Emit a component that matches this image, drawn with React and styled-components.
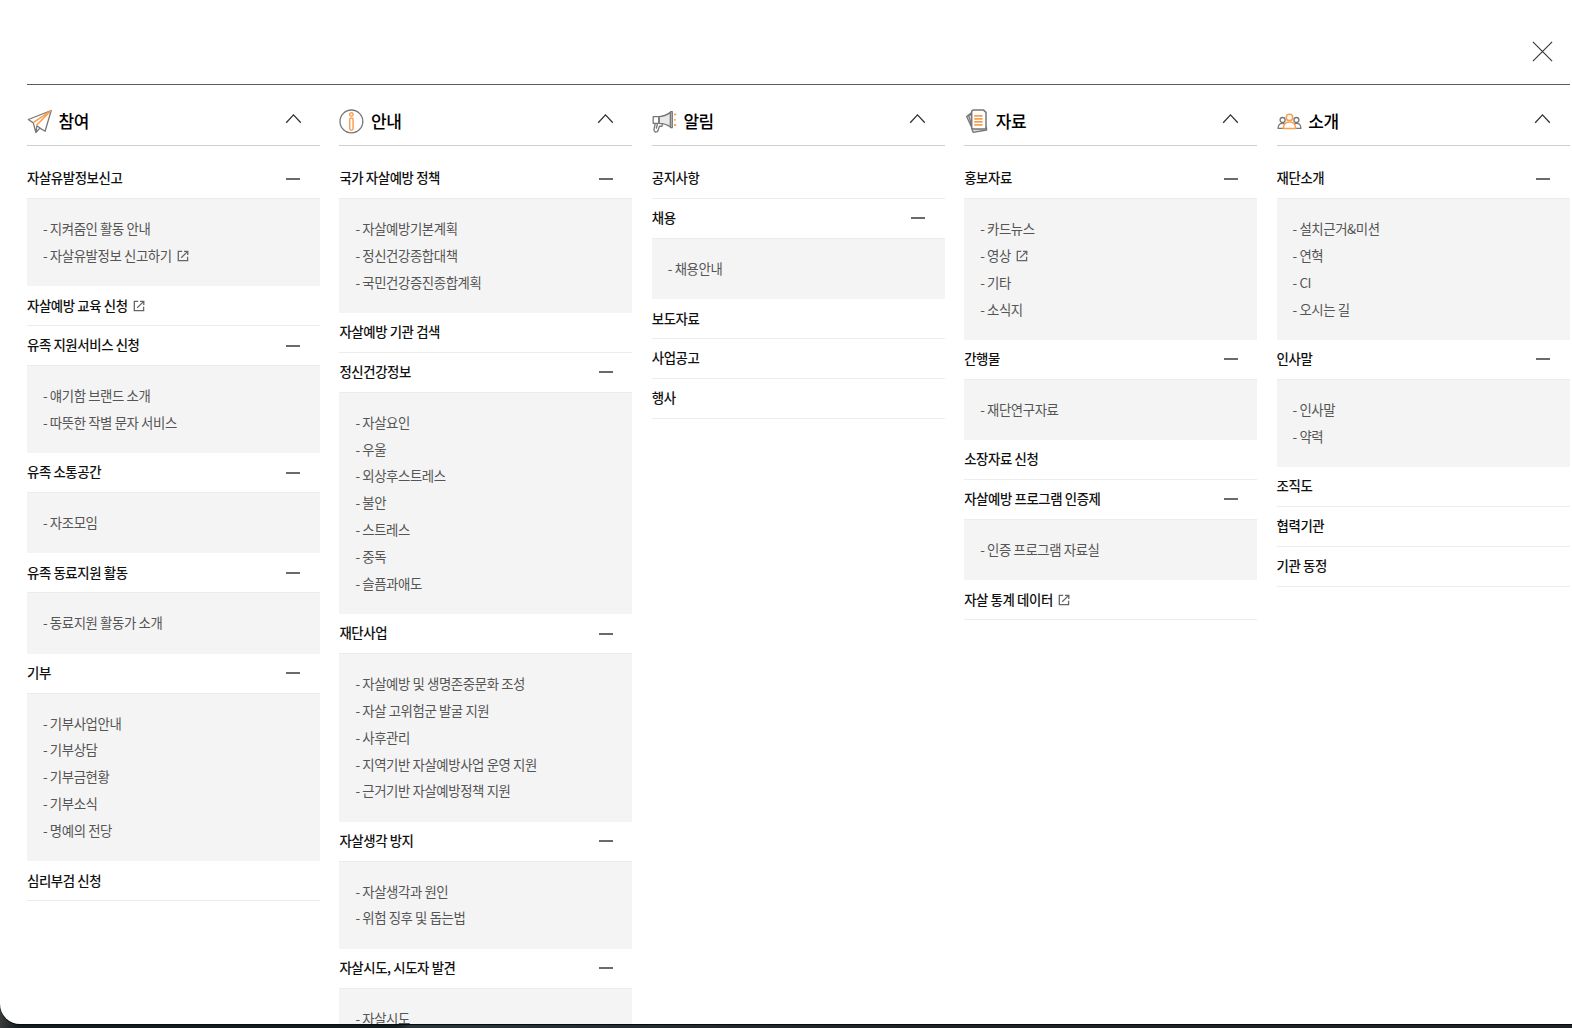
import React from "react";
import styled, { createGlobalStyle } from "styled-components";

const Global = createGlobalStyle`
  * { box-sizing: border-box; }
  html, body { margin: 0; padding: 0; background: #191c20; overflow: hidden; }
  body { font-family: "Noto Sans CJK KR", "Noto Sans", sans-serif; letter-spacing: -0.4px; }
  ul, h2, h3 { margin: 0; padding: 0; list-style: none; }
  svg { display: block; }
`;

const Screen = styled.div`
  height: 1028px;
  background: linear-gradient(90deg, #3b3b3b 0, #121c1f 18px, #121c1f 396px, #29373b 410px, #202326 900px, #202326 100%);
`;
const Panel = styled.main`
  height: 1024px;
  overflow: hidden;
  background: #fff;
  border-bottom-left-radius: 20px;
  padding: 0 2.4px 0 27px;
  box-shadow: 0 1px 0 #08090a;
`;
const TopBar = styled.header`
  height: 85px;
  display: flex;
  justify-content: flex-end;
  padding: 41px 16.4px 0 0;
  border-bottom: 1px solid #5c5c5c;
`;
const Button = styled.button`
  border: 0;
  padding: 0;
  background: none;
  display: block;
  height: max-content;
`;
const Columns = styled.div`
  display: grid;
  grid-template-columns: repeat(5, 293px);
  column-gap: 19.4px;
`;
const ColumnHead = styled.div`
  height: 61px;
  display: flex;
  align-items: center;
  padding: 12px 18.5px 0 0;
  border-bottom: 1px solid #cfcfcf;
`;
const Toggle = styled(Button)`
  padding-bottom: 5px;
`;
const Title = styled.h2`
  flex: 1;
  margin-left: 6.6px;
  font-size: 17px;
  line-height: 24px;
  font-weight: 500;
  color: #000;
`;
const Menu = styled.ul`
  padding-top: 13.2px;
`;
const MenuRow = styled.div`
  height: 39.85px;
  display: flex;
  align-items: center;
  justify-content: space-between;
  padding-right: 19.6px;
  border-bottom: 1px solid #ececec;
`;
const MenuLabel = styled.h3`
  display: flex;
  align-items: center;
  gap: 5.5px;
  padding-bottom: 2.3px;
  font-size: 13.4px;
  line-height: 20px;
  font-weight: 500;
  color: #111;
`;
const Minus = styled.span`
  width: 14px;
  height: 2px;
  background: #6a6a6a;
`;
const SubMenu = styled.ul`
  padding: 15.6px 16px 18px;
  background: #f4f4f4;
`;
const SubItem = styled.li`
  height: 26.83px;
  display: flex;
  align-items: center;
  gap: 5.5px;
  font-size: 13.4px;
  line-height: 20px;
  color: #555;
  white-space: nowrap;
`;
const ExternalMark = styled.svg`
  margin-top: 2px;
`;

const Chevron = () => (
  <svg width="17" height="11" viewBox="0 0 17 11" fill="none" stroke="#333" strokeWidth="1.3">
    <path d="M1.2 9.7 8.5 1.9l7.3 7.8" />
  </svg>
);
const External = () => (
  <ExternalMark width="12" height="12" viewBox="0 0 12 12" fill="none" stroke="#666" strokeWidth="1.3">
    <path d="M5.2 1.4H1.3v9.3h9.3V6.8M7 1.3h3.8V5M10.5 1.6 4.2 7.8" />
  </ExternalMark>
);

const gray = { stroke: "#777", strokeWidth: 1.3, strokeLinejoin: "round", strokeLinecap: "round", fill: "none" };
const orange = { ...gray, stroke: "#f9a050" };
const icons = {
  plane: (
    <>
      <path {...gray} d="M24.2 1.5 1.3 10.5l5 3.4L8.9 23.5l4-4.4 5.2 3.2zM8.9 23.5 9.9 16.8l3.2 2.2M6.3 13.9l2.6 9.6" />
      <path {...orange} strokeWidth={1.6} d="M23.4 2.2 6.6 13.4M23.4 2.2 9.8 16" />
    </>
  ),
  info: (
    <>
      <circle {...gray} cx="12.4" cy="12.4" r="11.4" />
      <circle {...orange} strokeWidth={1.5} cx="12.4" cy="5.4" r="1.7" />
      <rect {...orange} strokeWidth={1.5} x="10.7" y="9" width="3.4" height="12.2" rx="1.7" />
    </>
  ),
  horn: (
    <>
      <path {...gray} fill="#e9e9e9" d="M18.4 3.4V18c-3.4-2.4-7.4-3.6-11.2-3.6V7.6C11 7.6 15 5.8 18.4 3.4z" />
      <path {...gray} d="M1.2 7.6h5.6v6.8H1.2zM18.6 2.7h1.7v16h-1.7zM3.2 14.6 1.9 21l1.2 2 2.4-.3 2-5.5 2.4.2.5-2.6M5.4 15l-1 4" />
      <path {...orange} strokeWidth={1.8} d="M22.8 5.4h.7M22.8 10.8h.2M22.8 16h.7" />
    </>
  ),
  papers: (
    <g transform="translate(1.4 0)">
      <path {...gray} fill="#ddd" d="M6 3.8 1.2 7.5l5 10.7M6 5.3 3.2 6.6l3 9M6.2 19.2l1.5 4.2 13.6-2.4-.4-3" />
      <path {...gray} strokeWidth={1.5} fill="#fff" d="M8 1.1h10.2l2.4 2.3v15.2a1.4 1.4 0 0 1-1.4 1.4H8a1.7 1.7 0 0 1-1.7-1.7V2.8A1.7 1.7 0 0 1 8 1.1z" />
      <path {...orange} strokeWidth={1.8} strokeLinecap="butt" d="M8.8 6.8h8.4M8.8 9.8h8.4M8.8 12.8h8.4M8.8 15.8h8.4" />
    </g>
  ),
  people: (
    <>
      <circle {...gray} cx="5.6" cy="11" r="2.5" />
      <circle {...gray} cx="19.4" cy="11" r="2.5" />
      <path {...gray} d="M6 19.4H1.1c0-3 1.8-5 4.5-5 1.2 0 2.2.4 3 1M18.9 19.4h5c0-3-1.8-5-4.5-5-1.2 0-2.2.4-3 1" />
      <circle {...orange} strokeWidth={1.5} cx="12.5" cy="8.4" r="3.2" />
      <path {...orange} strokeWidth={1.5} fill="#fff" d="M6.4 19.4c0-4 2.4-6.4 6.1-6.4s6.1 2.4 6.1 6.4z" />
    </>
  ),
};

const data = [
  ["참여", "plane", [
    ["자살유발정보신고", ["지켜줌인 활동 안내", "자살유발정보 신고하기*"]],
    ["자살예방 교육 신청*"],
    ["유족 지원서비스 신청", ["얘기함 브랜드 소개", "따뜻한 작별 문자 서비스"]],
    ["유족 소통공간", ["자조모임"]],
    ["유족 동료지원 활동", ["동료지원 활동가 소개"]],
    ["기부", ["기부사업안내", "기부상담", "기부금현황", "기부소식", "명예의 전당"]],
    ["심리부검 신청"],
  ]],
  ["안내", "info", [
    ["국가 자살예방 정책", ["자살예방기본계획", "정신건강종합대책", "국민건강증진종합계획"]],
    ["자살예방 기관 검색"],
    ["정신건강정보", ["자살요인", "우울", "외상후스트레스", "불안", "스트레스", "중독", "슬픔과애도"]],
    ["재단사업", ["자살예방 및 생명존중문화 조성", "자살 고위험군 발굴 지원", "사후관리", "지역기반 자살예방사업 운영 지원", "근거기반 자살예방정책 지원"]],
    ["자살생각 방지", ["자살생각과 원인", "위험 징후 및 돕는법"]],
    ["자살시도, 시도자 발견", ["자살시도"]],
  ]],
  ["알림", "horn", [
    ["공지사항"],
    ["채용", ["채용안내"]],
    ["보도자료"],
    ["사업공고"],
    ["행사"],
  ]],
  ["자료", "papers", [
    ["홍보자료", ["카드뉴스", "영상*", "기타", "소식지"]],
    ["간행물", ["재단연구자료"]],
    ["소장자료 신청"],
    ["자살예방 프로그램 인증제", ["인증 프로그램 자료실"]],
    ["자살 통계 데이터*"],
  ]],
  ["소개", "people", [
    ["재단소개", ["설치근거&미션", "연혁", "CI", "오시는 길"]],
    ["인사말", ["인사말", "약력"]],
    ["조직도"],
    ["협력기관"],
    ["기관 동정"],
  ]],
];

const Label = ({ text, prefix = "" }) => (
  <>
    <span>{prefix + text.replace("*", "")}</span>
    {text.endsWith("*") && <External />}
  </>
);

export default function App() {
  return (
    <>
      <Global />
      <Screen>
        <Panel>
          <TopBar>
            <Button aria-label="닫기">
              <svg width="21" height="21" viewBox="0 0 21 21" stroke="#333" strokeWidth="1.1">
                <path d="M.9.9l19.2 19.2M20.1.9.9 20.1" />
              </svg>
            </Button>
          </TopBar>
          <Columns>
            {data.map(([title, icon, items]) => (
              <section key={title}>
                <ColumnHead>
                  <svg width="25" height="25" viewBox="0 0 25 25">{icons[icon]}</svg>
                  <Title>{title}</Title>
                  <Toggle aria-label={title}><Chevron /></Toggle>
                </ColumnHead>
                <Menu>
                  {items.map(([name, subs]) => (
                    <li key={name}>
                      <MenuRow>
                        <MenuLabel><Label text={name} /></MenuLabel>
                        {subs && <Minus />}
                      </MenuRow>
                      {subs && (
                        <SubMenu>
                          {subs.map((s) => <SubItem key={s}><Label text={s} prefix="- " /></SubItem>)}
                        </SubMenu>
                      )}
                    </li>
                  ))}
                </Menu>
              </section>
            ))}
          </Columns>
        </Panel>
      </Screen>
    </>
  );
}
